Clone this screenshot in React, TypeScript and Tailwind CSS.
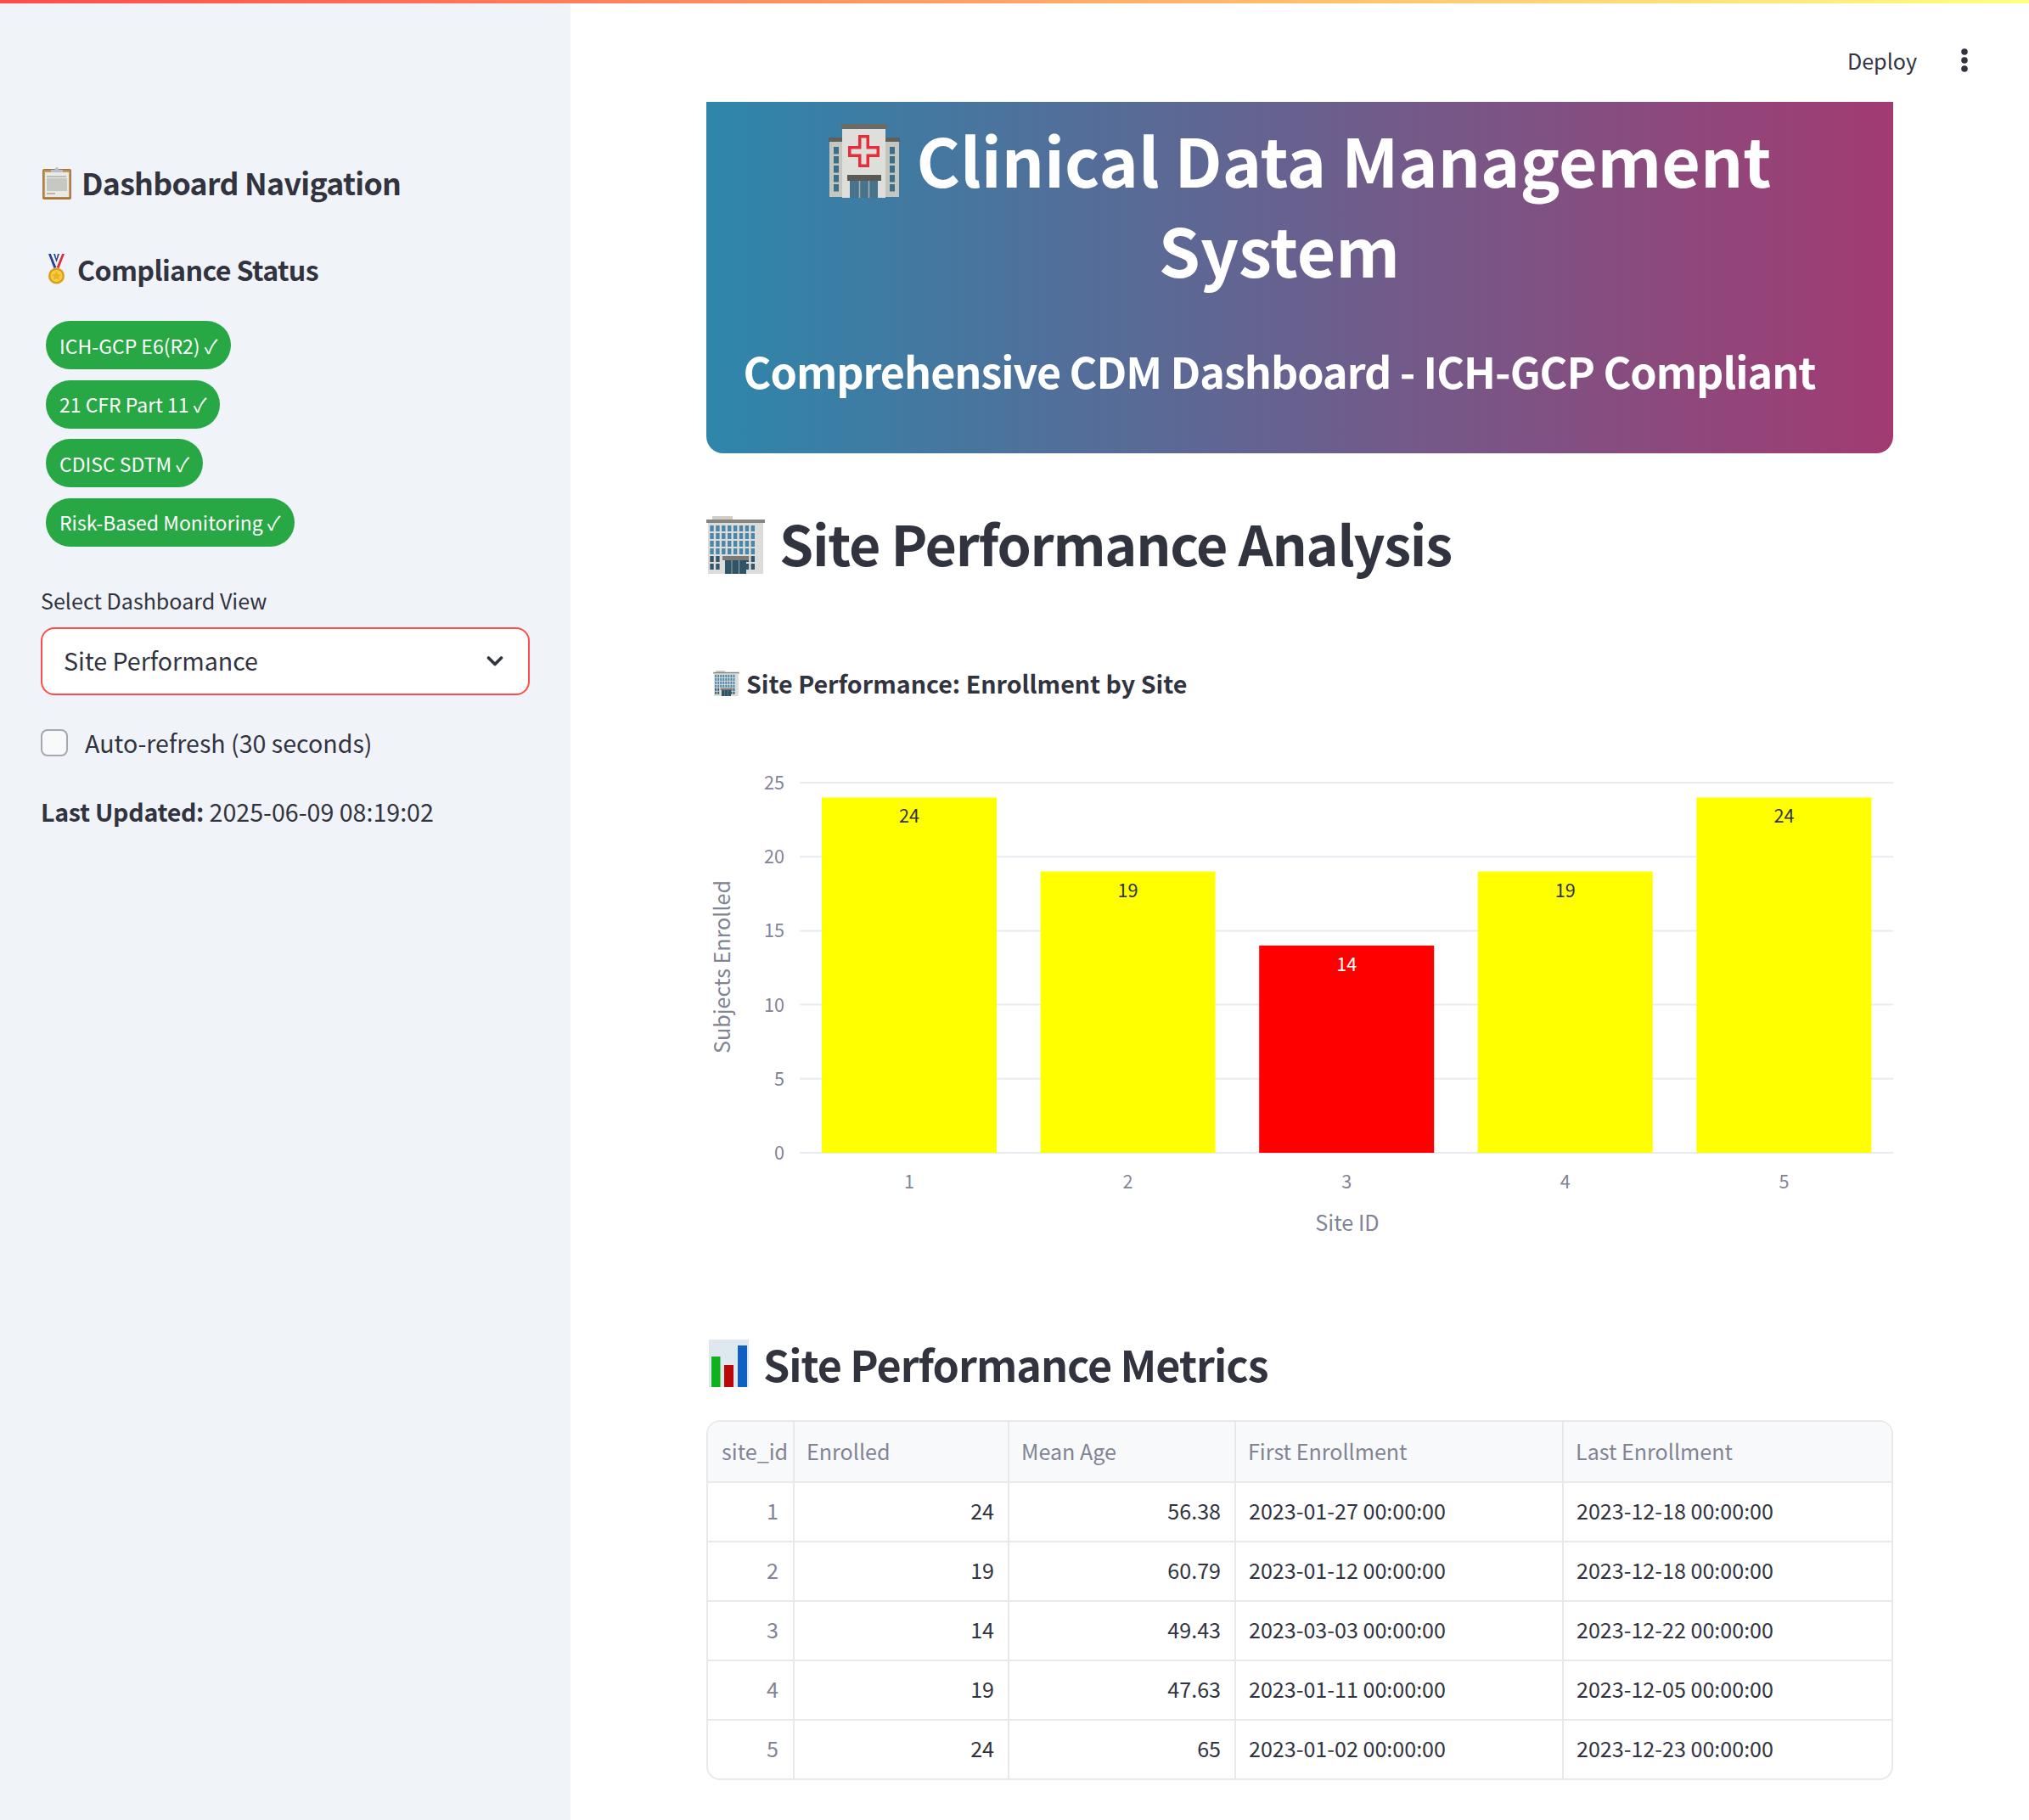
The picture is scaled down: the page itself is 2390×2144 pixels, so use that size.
const text = "text-[#31333f]";

const ClipboardIcon = ({ className }: { className?: string }) => (
  <svg viewBox="0 0 34 39" className={className}>
    <rect x="0" y="3" width="34" height="36" rx="2" fill="#a8753a" />
    <rect x="1.5" y="4.5" width="31" height="32" rx="1" fill="#c19a68" />
    <rect x="3" y="7" width="28" height="29" fill="#e9e9e6" />
    <rect x="5" y="11" width="23" height="2" fill="#bdbdb9" />
    <rect x="5" y="14" width="24" height="15" fill="#c7c7c4" />
    <rect x="5" y="31" width="10" height="2" fill="#b5b5b2" />
    <path d="M10 7V4h4.5c.8-4 4.2-4 5 0H24v3z" fill="#b9bfc7" />
  </svg>
);

const MedalIcon = ({ className }: { className?: string }) => (
  <svg viewBox="0 0 19 36" className={className}>
    <path d="M0 0h3l6.5 16-3 1z" fill="#2a3f96" />
    <path d="M19 0h-3l-6.5 16 3 1z" fill="#d3343a" />
    <path d="M3 0h3l3.5 10L13 0h3l-6.5 16z" fill="#f2f2f4" />
    <path d="M6 0h2l1.500 6L11 0h2l-3.500 10z" fill="#2a3f96" />
    <circle cx="9.500" cy="26" r="9.500" fill="#dc9e1a" />
    <circle cx="9.500" cy="26" r="7" fill="#f6cf3f" />
    <path d="M9.500 20.500l1.600 3.600 3.900.4-2.900 2.600.8 3.800-3.400-2-3.400 2 .8-3.800-2.900-2.600 3.900-.4z" fill="#eab126" />
  </svg>
);

const HospitalIcon = ({ className }: { className?: string }) => (
  <svg viewBox="0 0 84 87" className={className}>
    <rect x="0" y="16" width="84" height="5" rx="1" fill="#5f5f5c" />
    <rect x="1" y="21" width="82" height="65" fill="#c6c6c1" />
    <g fill="#3d6f88">
      {[27, 38, 49, 60, 71].map((y) => (
        <g key={y}>
          <rect x="6" y={y} width="6" height="8.500" />
          <rect x="72" y={y} width="6" height="8.500" />
        </g>
      ))}
    </g>
    <rect x="15" y="0" width="54" height="6" rx="1" fill="#6a6a67" />
    <rect x="16" y="6" width="51" height="81" fill="#dededa" />
    <path d="M35 13h13v13h12v13H48v12H35V39H23V26h12z" fill="#e62e3a" />
    <path d="M38.500 16.500h6v13h12v6h-12v12h-6v-12h-12v-6h12z" fill="#dededa" />
    <rect x="22" y="60" width="40" height="7" fill="#5b5a57" />
    <rect x="25" y="67" width="33" height="20" fill="#47748c" />
    <path d="M36.500 67v20M47.500 67v20" stroke="#a9b3b6" strokeWidth="1.500" />
  </svg>
);

const OfficeIcon = ({ className }: { className?: string }) => {
  const rows = [11, 20, 29, 38, 47, 56];
  const cols = [4.3, 11.2, 18.1, 25, 31.9, 38.8, 45.7, 52.6, 59.5];
  return (
    <svg viewBox="0 0 69 68" className={className}>
      <rect x="7" y="0" width="24" height="5" fill="#cfcdc6" />
      <rect x="0" y="4" width="69" height="4" fill="#86847e" />
      <rect x="2" y="8" width="65" height="60" fill="#dcdcda" />
      {rows.flatMap((y, r) =>
        cols.slice(0, 8).map((x, c) =>
          r >= 4 && c >= 2 && c <= 5 ? null : (
            <rect key={`${r}-${c}`} x={x} y={y} width="4.400" height="7" fill={r >= 4 ? "#33566c" : "#4a86a8"} />
          ),
        ),
      )}
      <rect x="19" y="47" width="31" height="5" fill="#7c7a75" />
      <rect x="22" y="52" width="25" height="16" fill="#2f5468" />
      <path d="M30 52v16M38.500 52v16" stroke="#9aa6aa" strokeWidth="1" />
    </svg>
  );
};

const ChartIcon = ({ className }: { className?: string }) => (
  <svg viewBox="0 0 47 56" className={className}>
    <rect width="47" height="56" fill="#dfe7ef" />
    <rect x="3" y="20" width="10.500" height="36" fill="#10b01e" />
    <rect x="18" y="30" width="11" height="26" fill="#b80808" />
    <rect x="34" y="7" width="11" height="49" fill="#0f5fc4" />
  </svg>
);

const siteBars = [
  { id: 1, value: 24, color: "#ffff00", label: "#31333f" },
  { id: 2, value: 19, color: "#ffff00", label: "#31333f" },
  { id: 3, value: 14, color: "#ff0000", label: "#ffffff" },
  { id: 4, value: 19, color: "#ffff00", label: "#31333f" },
  { id: 5, value: 24, color: "#ffff00", label: "#31333f" },
];

const y0 = 496;
const unit = 17.44;

const EnrollmentChart = () => (
  <svg width="1398" height="600" viewBox="0 0 1398 600" className="block" fontFamily="'Noto Sans CJK SC', sans-serif">
    {[0, 5, 10, 15, 20, 25].map((tick) => (
      <g key={tick}>
        <line x1="110" x2="1398" y1={y0 - tick * unit} y2={y0 - tick * unit} stroke="#e8ebf2" strokeWidth="2" />
        <text x="92" y={y0 - tick * unit + 8} textAnchor="end" fontSize="21.6" fill="#808495">{tick}</text>
      </g>
    ))}
    {siteBars.map((bar, i) => {
      const x = 136 + i * 257.6;
      const h = bar.value * unit;
      return (
        <g key={bar.id}>
          <rect x={x} y={y0 - h} width="206" height={h} fill={bar.color} />
          <text x={x + 103} y={y0 - h + 30} textAnchor="middle" fontSize="21.6" fill={bar.label}>{bar.value}</text>
          <text x={x + 103} y="538" textAnchor="middle" fontSize="21.6" fill="#808495">{bar.id}</text>
        </g>
      );
    })}
    <text x="755" y="588" textAnchor="middle" fontSize="25.2" fill="#808495">Site ID</text>
    <text transform="translate(28 277) rotate(-90)" textAnchor="middle" fontSize="25.1" fill="#808495">Subjects Enrolled</text>
  </svg>
);

const complianceItems = ["ICH-GCP E6(R2) ✓", "21 CFR Part 11 ✓", "CDISC SDTM ✓", "Risk-Based Monitoring ✓"];

const metrics = [
  { site: 1, enrolled: 24, age: "56.38", first: "2023-01-27 00:00:00", last: "2023-12-18 00:00:00" },
  { site: 2, enrolled: 19, age: "60.79", first: "2023-01-12 00:00:00", last: "2023-12-18 00:00:00" },
  { site: 3, enrolled: 14, age: "49.43", first: "2023-03-03 00:00:00", last: "2023-12-22 00:00:00" },
  { site: 4, enrolled: 19, age: "47.63", first: "2023-01-11 00:00:00", last: "2023-12-05 00:00:00" },
  { site: 5, enrolled: 24, age: "65", first: "2023-01-02 00:00:00", last: "2023-12-23 00:00:00" },
];

const headers = ["site_id", "Enrolled", "Mean Age", "First Enrollment", "Last Enrollment"];

const Sidebar = () => (
  <aside className={`w-[672px] shrink-0 bg-[#f0f3f8] px-[48px] pt-[186px] ${text}`}>
    <div className="flex h-[50px] items-center gap-[12px] pl-[2px]">
      <ClipboardIcon className="h-[39px] w-[34px]" />
      <h2 className="text-[35.7px] leading-[50px] font-semibold tracking-[-0.02em]">Dashboard Navigation</h2>
    </div>
    <div className="mt-[54px] flex h-[46px] items-center gap-[15px] pl-[9px]">
      <MedalIcon className="h-[36px] w-[19px]" />
      <h3 className="text-[32.2px] leading-[46px] font-semibold tracking-[-0.02em]">Compliance Status</h3>
    </div>
    <div className="mt-[38px] flex flex-col items-start gap-[12.6px] pl-[6px]">
      {complianceItems.map((item) => (
        <span key={item} className="flex h-[57px] items-center rounded-full bg-[#28a745] px-[16px] text-[23px] leading-[32px] text-white">
          {item}
        </span>
      ))}
    </div>
    <label className="mt-[45px] block text-[25.1px] leading-[36px]">Select Dashboard View</label>
    <div className="mt-[14px] flex h-[80px] items-center justify-between rounded-[16px] border-2 border-[#ff4b4b] bg-white pl-[25px] pr-[29px] text-[28.6px]">
      <span>Site Performance</span>
      <svg width="20" height="14" viewBox="0 0 20 14" fill="none" stroke="#31333f" strokeWidth="3.6" strokeLinecap="round" strokeLinejoin="round">
        <path d="M2.500 3L10 10.500L17.500 3" />
      </svg>
    </div>
    <div className="mt-[40px] flex h-[32px] items-center gap-[20px]">
      <span className="h-[32px] w-[32px] rounded-[8px] border-2 border-[#a5a7b1] bg-[#f8f9fb]" />
      <span className="text-[28.6px] leading-[40px]">Auto-refresh (30 seconds)</span>
    </div>
    <p className="mt-[43px] text-[28.6px] leading-[44px]">
      <strong className="font-semibold tracking-[-0.01em]">Last Updated:</strong> 2025-06-09 08:19:02
    </p>
  </aside>
);

const MetricsTable = () => (
  <div className="mt-[32px] overflow-hidden rounded-[16px] border-2 border-[#e8e9ec] text-[25.1px] leading-[36px]">
    <div className="grid h-[70px] grid-cols-[100px_253px_267px_386px_1fr] bg-[#f8f9fb] text-[#808495]">
      {headers.map((h, i) => (
        <div key={h} className={`flex items-center pb-[2px] ${i === 0 ? "pl-[16px]" : "border-l-2 border-[#e8e9ec] pl-[14px]"}`}>
          {h}
        </div>
      ))}
    </div>
    {metrics.map((row) => (
      <div key={row.site} className="grid h-[70px] grid-cols-[100px_253px_267px_386px_1fr] border-t-2 border-[#e8e9ec]">
        <div className="flex items-center justify-end pb-[4px] pr-[17px] text-[#808495]">{row.site}</div>
        <div className="flex items-center justify-end border-l-2 border-[#e8e9ec] pb-[4px] pr-[16px]">{row.enrolled}</div>
        <div className="flex items-center justify-end border-l-2 border-[#e8e9ec] pb-[4px] pr-[16px]">{row.age}</div>
        <div className="flex items-center border-l-2 border-[#e8e9ec] pb-[4px] pl-[15px]">{row.first}</div>
        <div className="flex items-center border-l-2 border-[#e8e9ec] pb-[4px] pl-[15px]">{row.last}</div>
      </div>
    ))}
  </div>
);

export default function App() {
  return (
    <div className="flex h-[2144px] w-[2390px] flex-col overflow-hidden bg-white font-['Noto_Sans_CJK_SC',sans-serif]">
      <div className="h-[4px] shrink-0 bg-[linear-gradient(90deg,#ff4b4b,#ffff80)]" />
      <div className="flex flex-1">
        <Sidebar />
        <main className={`relative min-w-0 flex-1 px-[160px] pt-[116px] ${text}`}>
          <div className="absolute top-[44px] right-[70px] flex items-center gap-[50px]">
            <span className="text-[25.1px] leading-[46px]">Deploy</span>
            <svg width="12" height="32" viewBox="0 0 12 32" fill="#31333f">
              <circle cx="6" cy="6" r="3.800" />
              <circle cx="6" cy="16" r="3.800" />
              <circle cx="6" cy="26" r="3.800" />
            </svg>
          </div>

          <div className="h-[414px] rounded-b-[20px] bg-[linear-gradient(90deg,#2e86ab,#a23b72)] pt-[15px] text-center text-white">
            <h1 className="text-[78.6px] leading-[105.6px] font-bold">
              <HospitalIcon className="mr-[20px] inline-block h-[87px] w-[84px] align-[-12px]" />
              Clinical Data Management<br />System<span className="inline-block w-[48px]" />
            </h1>
            <h3 className="mt-[56px] text-[50.2px] leading-[68px] font-semibold tracking-[-0.02em]">
              Comprehensive CDM Dashboard - ICH-GCP Compliant<span className="inline-block w-[48px]" />
            </h3>
          </div>

          <div className="mt-[64px] flex h-[88px] items-center gap-[17px]">
            <OfficeIcon className="h-[68px] w-[69px]" />
            <h2 className="pb-[6px] text-[64.5px] leading-[88px] font-semibold tracking-[-0.02em]">Site Performance Analysis</h2>
          </div>

          <div className="mt-[99px] flex h-[40px] items-center gap-[8px] pl-[8px]">
            <OfficeIcon className="h-[30px] w-[31px]" />
            <span className="text-[28.6px] leading-[40px] font-bold">Site Performance: Enrollment by Site</span>
          </div>

          <div className="mt-[37px]">
            <EnrollmentChart />
          </div>

          <div className="mt-[109px] flex h-[70px] items-center gap-[17px] pl-[3px]">
            <ChartIcon className="h-[56px] w-[47px]" />
            <h2 className="text-[50.2px] leading-[70px] font-semibold tracking-[-0.02em]">Site Performance Metrics</h2>
          </div>

          <MetricsTable />
        </main>
      </div>
    </div>
  );
}
